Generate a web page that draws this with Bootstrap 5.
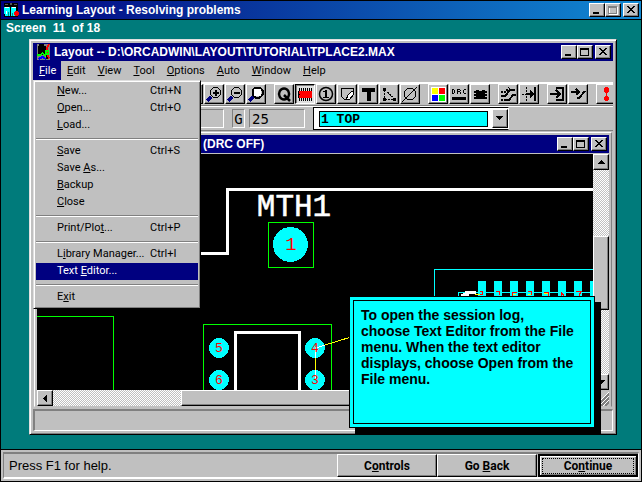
<!DOCTYPE html>
<html lang="en">
<head>
<meta charset="utf-8">
<meta name="viewport" content="width=device-width, initial-scale=1">
<title>Learning Layout - Resolving problems</title>
<link href="https://cdn.jsdelivr.net/npm/bootstrap@5.3.0/dist/css/bootstrap.min.css" rel="stylesheet">
<style>
:root{--face:#c0c0c0;--shade:#808080;--navy:#000080;--teal:#007b7b;--aqua:#00ffff}
body{font:12px/16px "Liberation Sans",Arial,sans-serif;color:#000;background:var(--face);border:1px solid #000;overflow:hidden}
button,select{font:inherit;color:inherit;border-radius:0;margin:0}
svg{display:block;flex:none}
.pix{shape-rendering:crispEdges}
.titlebar{height:18px;color:#fff;font-weight:700;font-size:12px;background:var(--navy);white-space:nowrap;flex:none}
.titlebar h1,.titlebar h2{font-size:inherit;font-weight:700;line-height:16px;margin:0}
.wingroup{padding-right:2px}
.outer-title{background:linear-gradient(90deg,#000080 0%,#08309a 35%,#0d60b8 70%,#1088d2 100%);border-bottom:1px solid #000;height:19px;padding-left:2px}
.outer-title h1{padding-left:3px}
.raised{background:var(--face);border:1px solid;border-color:#fff #000 #000 #fff;box-shadow:inset -1px -1px var(--shade);padding:0;display:flex;align-items:center;justify-content:center;flex:none}
.winbtn{width:16px;height:14px}
.winbtn.shut{margin-left:2px}
.stage{background:var(--teal);border-bottom:1px solid #000;padding:0 24px 14px 28px}
.counter{color:#fff;font-weight:700;font-size:12px;height:19px;margin-left:-23px;white-space:pre;margin-bottom:0}
.frame{background:var(--face);border:1px solid;border-color:#dfdfdf #000 #000 #dfdfdf;box-shadow:inset 1px 1px #fff,inset -1px -1px var(--shade);padding:3px}
.menubar{height:21px;padding-bottom:2px;font:11px/16px Roboto,"Liberation Sans",sans-serif}
.menubar .entry{display:block;color:#000;text-decoration:none;padding:0 6px;height:19px;line-height:19px}
.menubar .entry.open{background:var(--navy);color:#fff;width:28px}
.filemenu{position:absolute;z-index:5;top:19px;left:0;width:168px;background:var(--face);border:1px solid;border-color:#dfdfdf #000 #000 #dfdfdf;box-shadow:inset 1px 1px #fff,inset -1px -1px var(--shade);padding:2px}
.filemenu button{display:flex;width:100%;height:17px;line-height:16px;border:0;background:none;padding:0 10px 0 21px;text-align:left;white-space:nowrap}
.filemenu button span{width:93px;flex:none}
.filemenu button.chosen{background:var(--navy);color:#fff}
.filemenu hr{margin:4px 0 3px;border:0;height:2px;background:linear-gradient(var(--shade) 50%,#fff 50%);opacity:1}
.toolbar{height:25px;border-top:2px solid #fff;border-bottom:1px solid #fff;box-shadow:inset 0 -1px var(--shade);padding-left:150px;overflow:hidden}
.tool{width:20px;height:20px;margin-right:1px}
.tool.last{margin-right:8px}
.tool.pressed{border-color:#000 #fff #fff #000;background:#e0e0e0;box-shadow:inset 1px 1px var(--shade)}
.fields{height:23px;padding-left:150px}
.readout{height:19px;border:1px solid;border-color:var(--shade) #fff #fff var(--shade);font:14px/18px "DejaVu Sans Mono","Liberation Mono",monospace;padding:0 2px}
.layerbox{border:1px solid #000;border-right-color:#fff;background:#fff;padding:2px 0 2px 5px;height:23px;width:196px}
.layerbox select{appearance:none;background:var(--aqua);border:1px solid #000;padding:1px 1px 0;font:700 13px/13px "Liberation Mono",monospace;height:16px;width:169px}
.layerbox .raised{width:16px;height:19px}
.child{border-top:1px solid var(--shade);padding:1px 1px 2px 1px;min-height:0}
.childframe{border:1px solid;border-color:#fff var(--shade) var(--face) #fff;padding:2px 2px 0 2px;min-height:0}
.child .titlebar{border-bottom:0;padding-left:150px;margin-bottom:1px}
.board{background:#000;min-width:0;min-height:0;overflow:hidden}
.board > svg{width:100%;height:100%}
.track{background:conic-gradient(#fff 25%,var(--face) 0 50%,#fff 0 75%,var(--face) 0) 0 0/2px 2px}
.vbar,.grip{width:16px;flex:none}
.hbar{height:16px}
.sb{width:16px;height:16px}
.vthumb{flex:73 1 0;height:auto;width:16px}
.message{height:22px;border:2px solid;border-color:var(--shade) #fff #fff var(--shade);border-width:2px 1px 1px 2px;flex:none}
.hint{position:absolute;z-index:6;right:21px;bottom:6px;width:246px;height:132px;background:var(--aqua);border:1px solid #000;box-shadow:6px 6px #000;padding:3px}
.hint p{border:1px solid #000;height:100%;margin:0;padding:6px 7px;font-weight:700;font-size:14px;line-height:16px;white-space:nowrap}
.statusbar{background:var(--face);height:31px;padding:2px;flex:none}
.well{border:2px solid;border-width:2px 1px 2px 1px;border-color:var(--shade) #fff #fff var(--shade);padding-left:5px;font-size:13px}
.command{width:100px;height:23px;font-weight:700;font-size:12px;font-family:Roboto,"Liberation Sans",sans-serif}
.command.default{border:2px solid #000;margin-left:1px;box-shadow:inset 1px 1px #fff,inset -1px -1px var(--shade);padding:2px}
.command.default span{border:1px dotted #000;width:100%;line-height:14px}
</style>
<script src="https://cdn.jsdelivr.net/npm/bootstrap@5.3.0/dist/js/bootstrap.bundle.min.js"></script>
</head>
<body class="d-flex flex-column vh-100">
<header class="titlebar outer-title d-flex align-items-center">
  <svg class="pix" width="16" height="16" viewBox="0 0 16 16"><path fill="#000" d="M1 1h14v14H1z"/><path fill="#555" d="M2 2h3v1H2zM7 1h2v2H7zM11 2h3v1h-3z"/><path fill="#0ff" d="M1 5h6v9H2v-2H1zM8 5h5v9H8z"/><path fill="#fff" d="M2 5h4v1H2zM9 5h4v1H9zM3 9h1v3H3z"/><path fill="red" d="M12 9h3v5h-3zM11 10h5v3h-5z"/><path fill="#088" d="M5 10h1v4H5zM9 11h1v3H9z"/></svg>
  <h1 class="flex-grow-1">Learning Layout - Resolving problems</h1>
  <div class="wingroup d-flex">
    <button class="raised winbtn" aria-label="Minimize"><svg class="pix" width="12" height="10"><path d="M2 7h6v2H2z"/></svg></button>
    <button class="raised winbtn" aria-label="Maximize" disabled><svg class="pix" width="12" height="10"><path fill="none" stroke="#fff" d="M2.500 2.500h8v7h-8z"/><path fill="none" stroke="#808080" d="M1.500 1.500h8v7h-8zM1 2.500h9"/></svg></button>
    <button class="raised winbtn shut" aria-label="Close"><svg class="pix" width="12" height="10"><path d="M2 1h2v1h1v1h2V2h1V1h2v1H9v1H8v1H7v1h1v1h1v1h1v1H8V7H7V6H5v1H4v1H2V7h1V6h1V5h1V4H4V3H3V2H2z"/></svg></button>
  </div>
</header>

<main class="stage flex-grow-1 d-flex flex-column">
  <p class="counter">Screen  11  of 18</p>
  <section class="frame position-relative flex-grow-1 d-flex flex-column">
    <div class="titlebar d-flex align-items-center">
      <svg class="pix mx-1" width="13" height="16" viewBox="0 0 16 16" preserveAspectRatio="none"><path fill="#808080" d="M0 0h16v16H0z"/><path d="M1 2h10v9H1zM3 0h6v3H3zM11 11h4v4h-4z"/><path fill="none" stroke="red" stroke-width="2" d="M15 0l-3 4v6l3 4"/><path fill="none" stroke="#0f0" stroke-width="2" d="M0 11h4l3-2 3 3M11 7h3v3h-3z"/><path fill="none" stroke="#00f" stroke-width="2" d="M2 15l5-2 4 2"/></svg>
      <h2 class="flex-grow-1">Layout -- D:\ORCADWIN\LAYOUT\TUTORIAL\TPLACE2.MAX</h2>
      <div class="wingroup d-flex">
        <button class="raised winbtn" aria-label="Minimize"><svg class="pix" width="12" height="10"><path d="M2 7h6v2H2z"/></svg></button>
        <button class="raised winbtn" aria-label="Maximize"><svg class="pix" width="12" height="10"><path fill="none" stroke="#000" d="M1.500 1.500h8v7h-8zM1 2h9"/></svg></button>
        <button class="raised winbtn shut" aria-label="Close"><svg class="pix" width="12" height="10"><path d="M2 1h2v1h1v1h2V2h1V1h2v1H9v1H8v1H7v1h1v1h1v1h1v1H8V7H7V6H5v1H4v1H2V7h1V6h1V5h1V4H4V3H3V2H2z"/></svg></button>
      </div>
    </div>

    <nav class="menubar d-flex" aria-label="Main menu">
      <div class="position-relative">
        <a class="entry open" href="#"><u>F</u>ile</a>
        <div class="filemenu">
          <button><span><u>N</u>ew...</span>Ctrl+N</button>
          <button><span><u>O</u>pen...</span>Ctrl+O</button>
          <button><span><u>L</u>oad...</span></button>
          <hr>
          <button><span><u>S</u>ave</span>Ctrl+S</button>
          <button><span>Save <u>A</u>s...</span></button>
          <button><span><u>B</u>ackup</span></button>
          <button><span><u>C</u>lose</span></button>
          <hr>
          <button><span>Print/Plo<u>t</u>...</span>Ctrl+P</button>
          <hr>
          <button><span>L<u>i</u>brary Manager...</span>Ctrl+I</button>
          <button class="chosen"><span>Text <u>E</u>ditor...</span></button>
          <hr>
          <button><span>E<u>x</u>it</span></button>
        </div>
      </div>
      <a class="entry" href="#"><u>E</u>dit</a>
      <a class="entry" href="#"><u>V</u>iew</a>
      <a class="entry" href="#"><u>T</u>ool</a>
      <a class="entry" href="#"><u>O</u>ptions</a>
      <a class="entry" href="#"><u>A</u>uto</a>
      <a class="entry" href="#"><u>W</u>indow</a>
      <a class="entry" href="#"><u>H</u>elp</a>
    </nav>

    <div class="toolbar d-flex" role="toolbar" aria-label="Tools">
      <button class="raised tool" aria-label="Zoom all"></button>
      <button class="raised tool" aria-label="Zoom in"><svg class="pix" width="16" height="16"><path stroke="#000080" stroke-width="3" d="M1 15l4-4"/><path fill="none" stroke="#000" d="M7.500 1.500h4l3 3v4l-3 3h-4l-3-3v-4z"/><path d="M9 4h2v2h2v2h-2v2H9V8H7V6h2z"/></svg></button>
      <button class="raised tool" aria-label="Zoom out"><svg class="pix" width="16" height="16"><path stroke="#000080" stroke-width="3" d="M1 15l4-4"/><path fill="none" stroke="#000" d="M7.500 1.500h4l3 3v4l-3 3h-4l-3-3v-4z"/><path d="M7 6h6v2H7z"/></svg></button>
      <button class="raised tool last" aria-label="Zoom window"><svg class="pix" width="16" height="16"><path stroke="#000080" stroke-width="3" d="M1 15l4-4"/><path fill="none" stroke="#000" stroke-width="2" d="M7.500 1.500h4l3 3v4l-3 3h-4l-3-3v-4z"/><path fill="#fff" d="M6 3h7v7H6z"/></svg></button>
      <button class="raised tool" aria-label="Query"><svg width="16" height="16"><path fill="none" stroke="#000" stroke-width="2.500" d="M8 2.500a5 5.500 0 1 0 .1 0zM8 9l6 6"/></svg></button>
      <button class="raised tool pressed" aria-label="Component"><svg class="pix" width="16" height="16"><path fill="none" stroke="#000" stroke-dasharray="1 1" stroke-width="3" d="M2 3.500h13M2 13.500h13"/><path fill="#000" d="M1 5h14v7H1z"/><path fill="red" d="M2 5h13v7H2V9h1V8H2z"/></svg></button>
      <button class="raised tool" aria-label="Pin"><svg width="16" height="16"><circle cx="8" cy="8" r="6.500" fill="none" stroke="#000" stroke-width="1.500"/><path d="M7 4h2v7h2v1H5v-1h2V6H5V5h2z"/></svg></button>
      <button class="raised tool" aria-label="Obstacle"><svg class="pix" width="16" height="16"><path fill="none" stroke="#000" d="M14.500 5V2.500h-12v8l3 3h4"/><path fill="#fff" stroke="#000" d="M8.500 9.500l4-4h2v3l-4 5h-3z"/></svg></button>
      <button class="raised tool" aria-label="Text"><svg class="pix" width="16" height="16"><path d="M2 2h13v4h-4v9H7V6H2z"/></svg></button>
      <button class="raised tool" aria-label="Connection"><svg class="pix" width="16" height="16"><path d="M2 2h3v3H2zM2 12h3v3H2zM12 12h3v3h-3z"/><path fill="none" stroke="#000" stroke-dasharray="2 1" d="M4 4l10 9M3.500 4v9M4 13.500h9"/></svg></button>
      <button class="raised tool last" aria-label="Error"><svg class="pix" width="16" height="16"><path fill="none" stroke="#000" d="M5.500 2.500h5l3 3v5l-3 3h-5l-3-3v-5zM0 16L15 1"/></svg></button>
      <button class="raised tool" aria-label="Colors"><svg class="pix" width="16" height="16"><path fill="#fff" d="M1 1h15v15H1z"/><path fill="#ff0" d="M2 2h6v6H2z"/><path fill="red" d="M9 2h6v6H9z"/><path fill="#00f" d="M2 9h6v6H2z"/><path fill="#0f0" d="M9 9h6v6H9z"/></svg></button>
      <button class="raised tool" aria-label="Design rule check"><svg class="pix" width="16" height="16"><path fill="none" stroke="#000" d="M1.500 3v5M2 3.500h1M2 7.500h1M3.500 4v3M6.500 8V3M7 3.500h2M9.500 4v1M7 5.500h2M9.500 6v2M15 3.500h-2M12.500 4v3M13 7.500h2"/><path d="M1 11h14v3H1z"/></svg></button>
      <button class="raised tool last" aria-label="Footprints"><svg class="pix" width="16" height="16"><path d="M4 4h3v1h3V4h3v9H4z"/><path stroke="#000" stroke-width="2" d="M2 6h13M2 9h13M2 12h13"/></svg></button>
      <button class="raised tool" aria-label="Reconnect"><svg class="pix" width="16" height="16"><path fill="none" stroke="#000" stroke-width="2" d="M1 10h4l5-6h5M5 14h4l4-5h3"/><path fill="none" stroke="#000" stroke-dasharray="2 1" stroke-width="2" d="M1 6h4l4-4M1 14h4"/></svg></button>
      <button class="raised tool last" aria-label="Shove track"><svg class="pix" width="16" height="16"><path fill="none" stroke="#000" stroke-dasharray="2 1" d="M5.500 1v14M1 8h4"/><path fill="none" stroke="#000" stroke-width="2" d="M6 8h9M14 1v14"/><path d="M9 4l4 4-4 4z"/></svg></button>
      <button class="raised tool" aria-label="Edit segment"><svg class="pix" width="16" height="16"><path fill="none" stroke="#000" stroke-width="2" d="M1 8h10M7 4l4 4-4 4M7 2h7v12H7"/></svg></button>
      <button class="raised tool last" aria-label="Add route"><svg class="pix" width="16" height="16"><path fill="none" stroke="#000" stroke-width="2" d="M1 6h8M6 3l3 3-3 3M7 12h2l6-7"/></svg></button>
      <button class="raised tool" aria-label="Online check"><svg class="pix" width="16" height="16"><path fill="red" d="M7 1h3v1h1v4h-1v1H9v3h1v1h1v3h-1v1H7v-1H6v-3h1v-1h1V7H7V6H6V2h1z"/></svg></button>
    </div>

    <div class="fields d-flex align-items-center">
      <div class="readout" style="width:41px"></div>
      <div class="readout ms-2 px-0 text-center" style="width:13px">G</div>
      <div class="readout ms-1 me-2" style="width:56px">25</div>
      <div class="layerbox d-flex align-items-center justify-content-between">
        <select aria-label="Layer"><option>1  TOP</option></select>
        <button class="raised" aria-label="Show layers"><svg class="pix" width="8" height="5"><path d="M0 0h7L4 4H3z"/></svg></button>
      </div>
    </div>

    <div class="child flex-grow-1 d-flex flex-column">
      <div class="childframe flex-grow-1 d-flex flex-column">
        <div class="titlebar d-flex align-items-center">
          <h2 class="ms-3 flex-grow-1">(DRC OFF)</h2>
          <div class="wingroup d-flex">
            <button class="raised winbtn" aria-label="Minimize"><svg class="pix" width="12" height="10"><path d="M2 7h6v2H2z"/></svg></button>
            <button class="raised winbtn" aria-label="Maximize"><svg class="pix" width="12" height="10"><path fill="none" stroke="#000" d="M1.500 1.500h8v7h-8zM1 2h9"/></svg></button>
            <button class="raised winbtn shut" aria-label="Close"><svg class="pix" width="12" height="10"><path d="M2 1h2v1h1v1h2V2h1V1h2v1H9v1H8v1H7v1h1v1h1v1h1v1H8V7H7V6H5v1H4v1H2V7h1V6h1V5h1V4H4V3H3V2H2z"/></svg></button>
          </div>
        </div>
        <div class="flex-grow-1 d-flex board">
          <svg class="flex-grow-1 flex-shrink-1" font-family="Liberation Mono, monospace" text-anchor="middle">
            <g class="pix" fill="none">
              <path stroke="#fff" stroke-width="3" d="M0 99.500H190.500V35.500H2000M198.500 237V178.500H262.500V237"/>
              <path stroke="#0f0" d="M0 162.500H76.500V237M166.500 237V170.500H294.500V237M231.500 68.500h45v45h-45z"/>
              <path stroke="#0ff" d="M397.500 180V115.500H2000M421.500 150V138.500H2000"/>
              <path fill="#0ff" d="M441 127h8v40h-8zM457 127h8v40h-8zM473 127h8v40h-8zM489 127h8v40h-8zM505 127h8v40h-8zM521 127h8v40h-8zM537 127h8v40h-8zM553 127h8v40h-8z"/>
              <path fill="#fff" d="M428 137h11v3h-7v2h-8v-2h2v-1h2z"/>
              <path stroke="#ff0" d="M438 140.500h8M475 140.500h4M491 140.500h4M507 139.500h4"/>
              <path stroke="red" d="M443 137.500h2v3h-2M459 137.500h3v3M475 142v-4h5M491 137.500h3v3M507 138.500h4v3M524 142v-4l3 4M539 137.500h5l-2 4"/>
            </g>
            <g class="pix" fill="#0ff"><circle cx="253.500" cy="90.500" r="17.500"/><circle cx="182" cy="194" r="10"/><circle cx="182" cy="226" r="10"/><circle cx="278" cy="194" r="10"/><circle cx="278" cy="226" r="10"/></g>
            <path class="pix" fill="none" stroke="#ff0" d="M278.500 226V194L314 183"/>
            <path class="pix" fill="none" stroke="#fff" d="M278.500 226V216M278.500 204V194L288 191"/>
            <text x="257" y="62" font-size="31" fill="#fff" stroke="#fff" stroke-width=".5">MTH1</text>
            <g fill="red"><text x="254" y="96" font-size="19">1</text><g font-size="13"><text x="182" y="198">5</text><text x="182" y="230">6</text><text x="278" y="198">4</text><text x="278" y="230">3</text></g></g>
          </svg>
          <div class="vbar d-flex flex-column">
            <button class="raised sb" aria-label="Scroll up"><svg class="pix" width="7" height="4"><path d="M3 0h1l3 4H0z"/></svg></button>
            <div class="track" style="flex:67 1 0"></div>
            <div class="raised vthumb"></div>
            <div class="track" style="flex:65 1 0"></div>
            <button class="raised sb" aria-label="Scroll down"><svg class="pix" width="7" height="4"><path d="M0 0h7L4 4H3z"/></svg></button>
          </div>
        </div>
        <div class="hbar d-flex">
          <button class="raised sb" aria-label="Scroll left"><svg class="pix" width="4" height="7"><path d="M4 0v7L0 4V3z"/></svg></button>
          <div class="track" style="flex:128 1 0"></div>
          <div class="raised" style="flex:200 1 0"></div>
          <div class="track" style="flex:196 1 0"></div>
          <button class="raised sb" aria-label="Scroll right"><svg class="pix" width="4" height="7"><path d="M0 0v7l4-3V3z"/></svg></button>
          <svg class="grip pix" height="16"><path stroke="#808080" stroke-width="2" d="M4 16L16 4M8 16l8-8M12 16l4-4"/><path stroke="#fff" d="M2 16L16 2M6 16L16 6M10 16l6-6"/></svg>
        </div>
      </div>
    </div>
    <div class="message"></div>

    <aside class="hint"><p>To open the session log,<br>choose Text Editor from the File<br>menu. When the text editor<br>displays, choose Open from the<br>File menu.</p></aside>
  </section>
</main>

<footer class="statusbar d-flex">
  <div class="well flex-grow-1 d-flex align-items-center">
    <span class="flex-grow-1">Press F1 for help.</span>
    <button class="raised command"><span>C<u>o</u>ntrols</span></button>
    <button class="raised command"><span>Go <u>B</u>ack</span></button>
    <button class="raised command default"><span>Co<u>n</u>tinue</span></button>
  </div>
</footer>
</body>
</html>
